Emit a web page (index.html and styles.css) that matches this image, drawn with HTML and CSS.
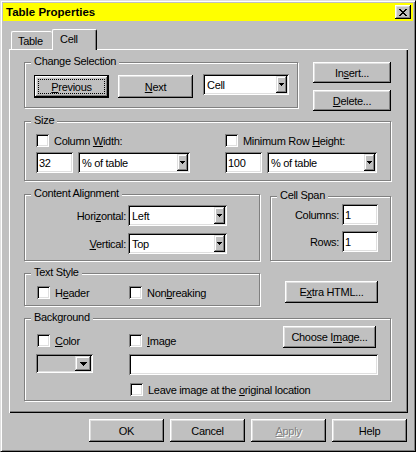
FILE: index.html
```html
<!DOCTYPE html>
<html lang="en">
<head>
<meta charset="utf-8">
<title>Table Properties</title>
<link rel="stylesheet" href="styles.css">
</head>
<body>
<div class="window">
  <div class="titlebar">
    <span class="title">Table Properties</span>
    <div class="close-btn"><svg width="8" height="7" viewBox="0 0 8 7" shape-rendering="crispEdges"><path fill="#000" d="M0 0h2v1h-2z M6 0h2v1h-2z M1 1h2v1h-2z M5 1h2v1h-2z M2 2h4v1h-4z M3 3h2v1h-2z M2 4h4v1h-4z M1 5h2v1h-2z M5 5h2v1h-2z M0 6h2v1h-2z M6 6h2v1h-2z"/></svg></div>
  </div>

  <div class="tabs">
    <div class="tab tab-table">Table</div>
    <div class="tab tab-cell">Cell</div>
  </div>

  <div class="panel">
    <div class="row row1">
      <div class="group g-change">
        <span class="legend">Change Selection</span>
        <div class="btn btn-sel default"><u>P</u>revious</div>
        <div class="btn btn-sel btn-next"><u>N</u>ext</div>
        <div class="combo c-cell"><span class="val">Cell</span><span class="ddb"><svg width="5" height="3" viewBox="0 0 5 3" shape-rendering="crispEdges"><path fill="#000" d="M0 0h5v1h-1v1h-1v1h-1v-1h-1v-1h-1z"/></svg></span></div>
      </div>
      <div class="side-btns">
        <div class="btn btn-side">In<u>s</u>ert...</div>
        <div class="btn btn-side"><u>D</u>elete...</div>
      </div>
    </div>

    <div class="row row2">
      <div class="group g-size">
        <span class="legend">Size</span>
        <div class="chk"><span class="box"></span><span>Column <u>W</u>idth:</span></div>
        <div class="chk"><span class="box"></span><span>Minimum Row <u>H</u>eight:</span></div>
        <div class="fields">
          <div class="field f-num">32</div>
          <div class="combo c-unit-l"><span class="val">% of table</span><span class="ddb"><svg width="5" height="3" viewBox="0 0 5 3" shape-rendering="crispEdges"><path fill="#000" d="M0 0h5v1h-1v1h-1v1h-1v-1h-1v-1h-1z"/></svg></span></div>
        </div>
        <div class="fields">
          <div class="field f-num">100</div>
          <div class="combo c-unit-r"><span class="val">% of table</span><span class="ddb"><svg width="5" height="3" viewBox="0 0 5 3" shape-rendering="crispEdges"><path fill="#000" d="M0 0h5v1h-1v1h-1v1h-1v-1h-1v-1h-1z"/></svg></span></div>
        </div>
      </div>
    </div>

    <div class="row row3">
      <div class="group g-align">
        <span class="legend">Content Alignment</span>
        <span class="lbl">Hori<u>z</u>ontal:</span>
        <div class="combo c-align"><span class="val">Left</span><span class="ddb"><svg width="5" height="3" viewBox="0 0 5 3" shape-rendering="crispEdges"><path fill="#000" d="M0 0h5v1h-1v1h-1v1h-1v-1h-1v-1h-1z"/></svg></span></div>
        <span class="lbl"><u>V</u>ertical:</span>
        <div class="combo c-align"><span class="val">Top</span><span class="ddb"><svg width="5" height="3" viewBox="0 0 5 3" shape-rendering="crispEdges"><path fill="#000" d="M0 0h5v1h-1v1h-1v1h-1v-1h-1v-1h-1z"/></svg></span></div>
      </div>
      <div class="group g-span">
        <span class="legend">Cell Span</span>
        <span class="lbl">Columns:</span>
        <div class="field f-span">1</div>
        <span class="lbl">Rows:</span>
        <div class="field f-span">1</div>
      </div>
    </div>

    <div class="row row4">
      <div class="group g-text">
        <span class="legend">Text Style</span>
        <div class="chk chk-first"><span class="box"></span><span>H<u>e</u>ader</span></div>
        <div class="chk"><span class="box"></span><span>Non<u>b</u>reaking</span></div>
      </div>
      <div class="btn btn-extra">E<u>x</u>tra HTML...</div>
    </div>

    <div class="row row5">
      <div class="group g-bg">
        <span class="legend">Background</span>
        <div class="bg-row bg-a">
          <div class="chk chk-first chk-low"><span class="box"></span><span><u>C</u>olor</span></div>
          <div class="chk chk-img chk-low"><span class="box"></span><span><u>I</u>mage</span></div>
          <div class="btn btn-choose">Choose I<u>m</u>age...</div>
        </div>
        <div class="bg-row bg-b">
          <div class="combo c-color"><span class="val"></span><span class="ddb ddb-big"><svg width="7" height="4" viewBox="0 0 7 4" shape-rendering="crispEdges"><path fill="#000" d="M0 0h7v1h-1v1h-1v1h-1v1h-1v-1h-1v-1h-1v-1h-1z"/></svg></span></div>
          <div class="field f-image"></div>
        </div>
        <div class="bg-row bg-c">
          <div class="chk chk-leave"><span class="box"></span><span>Leave image at the <u>o</u>riginal location</span></div>
        </div>
      </div>
    </div>
  </div>

  <div class="footer">
    <div class="btn btn-foot">OK</div>
    <div class="btn btn-foot">Cancel</div>
    <div class="btn btn-foot disabled"><u>A</u>pply</div>
    <div class="btn btn-foot">Help</div>
  </div>
</div>
</body>
</html>
```

FILE: styles.css
```css
* { box-sizing: border-box; }
html, body { margin: 0; padding: 0; }
body {
  background: #c0c0c0;
  font-family: "Liberation Sans", Arial, sans-serif;
  font-size: 11px;
  letter-spacing: -0.3px;
  color: #000;
}
u { text-decoration: underline; text-underline-offset: 1px; }

.window {
  width: 416px;
  height: 452px;
  border: 1px solid;
  border-color: #dfdfdf #000 #000 #dfdfdf;
  box-shadow: inset 1px 1px #fff, inset -1px -1px #808080;
  padding: 2px;
  background: #c0c0c0;
}

/* title bar */
.titlebar {
  height: 18px;
  background: #ffff00;
  display: flex;
  align-items: center;
  justify-content: space-between;
  padding: 0 2px 0 3px;
}
.title { font-weight: bold; font-size: 11.5px; letter-spacing: 0; }
.close-btn {
  width: 16px;
  height: 14px;
  background: #c0c0c0;
  box-shadow: inset -1px -1px #000, inset 1px 1px #fff, inset -2px -2px #808080, inset 2px 2px #dfdfdf;
  display: flex;
  align-items: center;
  justify-content: center;
}
.close-btn svg { display: block; margin-top: 0; }

/* tabs */
.tabs {
  display: flex;
  align-items: flex-end;
  height: 20px;
  margin: 8px 0 0 6px;
  padding-left: 2px;
}
.tab {
  background: #c0c0c0;
  border-top: 1px solid #fff;
  border-left: 1px solid #fff;
  border-radius: 2px 2px 0 0;
  display: flex;
  align-items: center;
}
.tab-table { width: 41px; height: 18px; padding-left: 6px; }
.tab-cell {
  width: 45px;
  height: 21px;
  margin-bottom: -1px;
  padding-left: 7px;
  padding-bottom: 2px;
  border-right: 1px solid #000;
  box-shadow: inset -1px 0 #808080;
  position: relative;
  z-index: 1;
}

/* panel */
.panel {
  margin-left: 6px;
  width: 399px;
  height: 364px;
  box-shadow: inset 1px 1px #fff, inset -1px -1px #000, inset -2px -2px #808080;
  padding: 13px 0 0 15px;
}
.row { display: flex; align-items: flex-start; }
.row1 { height: 49px; }
.row2 { margin-top: 10px; }
.row3 { margin-top: 13px; }
.row4 { margin-top: 12px; }
.row5 { margin-top: 12px; }

/* group box */
.group {
  position: relative;
  border: 1px solid #808080;
  box-shadow: 1px 1px 0 #fff, inset 1px 1px 0 #fff;
}
.legend {
  position: absolute;
  top: -8px;
  left: 6px;
  padding: 0 3px;
  line-height: 13px;
  background: #c0c0c0;
  white-space: nowrap;
}

/* buttons */
.btn {
  display: flex;
  align-items: center;
  justify-content: center;
  background: #c0c0c0;
  box-shadow: inset -1px -1px #000, inset 1px 1px #fff, inset -2px -2px #808080, inset 2px 2px #dfdfdf;
  white-space: nowrap;
}
.btn.default {
  border: 1px solid #000;
  box-shadow: inset -1px -1px #000, inset 1px 1px #fff, inset -2px -2px #808080, inset 2px 2px #dfdfdf;
  outline: 1px dotted #000;
  outline-offset: -5px;
}
.btn.disabled { color: #808080; text-shadow: 1px 1px 0 #fff; }

/* Change Selection */
.g-change {
  width: 274px;
  height: 46px;
  display: flex;
  align-items: flex-start;
  padding: 12px 0 0 9px;
}
.btn-sel { width: 75px; height: 23px; }
.btn-next { margin-left: 9px; }
.c-cell { width: 86px; margin-left: 10px; margin-top: -1px; }
.side-btns { margin-left: 15px; display: flex; flex-direction: column; gap: 7px; }
.btn-side { width: 78px; height: 21px; }

/* combo / fields */
.combo {
  display: flex;
  align-items: center;
  height: 21px;
  padding: 2px;
  background: #fff;
  box-shadow: inset 1px 1px #808080, inset -1px -1px #fff, inset 2px 2px #000, inset -2px -2px #dfdfdf;
}
.combo .val { flex: 1; padding-left: 2px; white-space: nowrap; overflow: hidden; }
.ddb {
  width: 11px;
  height: 17px;
  background: #c0c0c0;
  box-shadow: inset -1px -1px #000, inset 1px 1px #dfdfdf, inset -2px -2px #808080, inset 2px 2px #fff;
  display: flex;
  align-items: center;
  justify-content: center;
}
.ddb svg { display: block; }
.field {
  height: 21px;
  background: #fff;
  box-shadow: inset 1px 1px #808080, inset -1px -1px #fff, inset 2px 2px #000, inset -2px -2px #dfdfdf;
  display: flex;
  align-items: center;
  padding-left: 3px;
}

/* checkbox */
.chk { display: flex; align-items: center; height: 13px; white-space: nowrap; }
.box {
  width: 13px;
  height: 13px;
  margin-left: 1px;
  margin-right: 5px;
  background: #fff;
  box-shadow: inset 1px 1px #808080, inset -1px -1px #fff, inset 2px 2px #000, inset -2px -2px #dfdfdf;
  flex: none;
}

/* Size */
.g-size {
  width: 367px;
  height: 60px;
  padding: 12px 0 0 11px;
  display: grid;
  grid-template-columns: 189px auto;
  row-gap: 5px;
  align-content: start;
}
.fields { display: flex; gap: 5px; }
.f-num { width: 37px; }
.c-unit-l { width: 112px; }
.c-unit-r { width: 110px; }

/* Content alignment */
.g-align {
  width: 236px;
  height: 67px;
  padding-top: 10px;
  display: grid;
  grid-template-columns: 101px 99px;
  column-gap: 2px;
  row-gap: 7px;
  align-items: center;
  align-content: start;
}
.lbl { text-align: right; white-space: nowrap; }
.c-align { width: 99px; }

.g-span {
  width: 121px;
  height: 65px;
  margin-left: 10px;
  margin-top: 2px;
  padding-top: 7px;
  display: grid;
  grid-template-columns: 68px 36px;
  column-gap: 3px;
  row-gap: 6px;
  align-items: center;
  align-content: start;
}
.f-span { width: 36px; }

/* Text style */
.g-text {
  width: 236px;
  height: 33px;
  padding: 12px 0 0 12px;
  display: flex;
  align-items: flex-start;
}
.chk .box { margin-left: 0; }
.chk-first { width: 92px; }
.btn-extra { width: 93px; height: 22px; margin-left: 25px; margin-top: 8px; }

/* Background */
.g-bg {
  width: 367px;
  height: 83px;
  padding: 7px 0 0 12px;
}
.bg-row { display: flex; align-items: flex-start; }
.bg-a { height: 22px; }
.chk-low { align-self: flex-end; margin-bottom: 1px; }
.chk-img { width: 154px; }
.btn-choose { width: 93px; height: 22px; }
.bg-b { margin-top: 6px; }
.c-color {
  width: 57px;
  height: 19px;
  margin-left: -1px;
  background: #c0c0c0;
}
.ddb-big { width: 16px; height: 15px; }
.f-image { width: 249px; margin-left: 36px; }
.bg-c { margin-top: 8px; padding-left: 93px; }
.chk-leave { height: 13px; }

/* footer */
.footer {
  display: flex;
  justify-content: flex-end;
  gap: 6px;
  margin-top: 6px;
  padding-right: 6px;
}
.btn-foot { width: 75px; height: 23px; }
```
